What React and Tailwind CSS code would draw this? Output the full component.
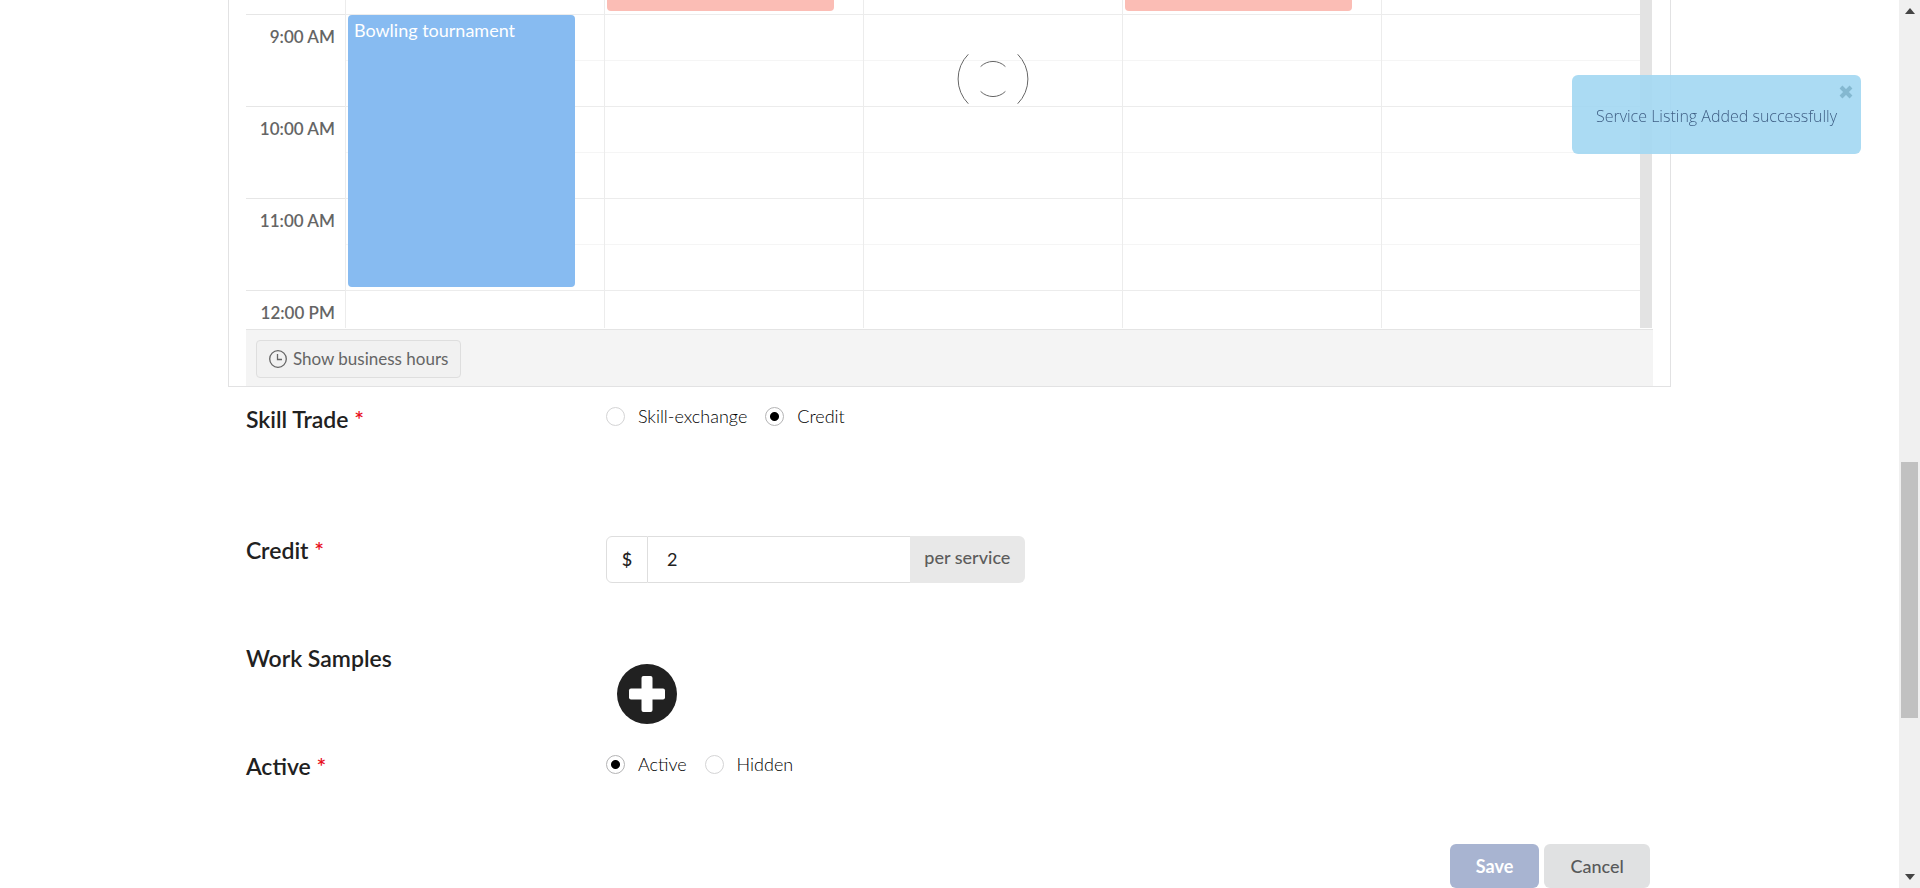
import React from "react";

const DAYS = ["mon", "tue", "wed", "thu", "fri"];

const HOURS = [
  { label: "9:00 AM", events: { mon: "Bowling tournament" } },
  { label: "10:00 AM", events: {} },
  { label: "11:00 AM", events: {} },
];

const ROW = "grid grid-cols-[99px_repeat(5,minmax(0,1fr))]";

function Scheduler() {
  return (
    <section
      aria-label="Schedule"
      className="border-x border-b border-[#e2e2e3] px-[17px]"
    >
      <div className="flex pr-px">
        <div className="flex-1 pb-px">
          <div className={ROW}>
            <div className="h-3.5" />
            {DAYS.map((day) => (
              <div key={day} className="relative h-3.5 border-l border-[#ececec]">
                {(day === "tue" || day === "thu") && (
                  <div className="absolute top-0 left-0.5 h-[11px] w-[88%] rounded-b-sm bg-[#fbbdb5]" />
                )}
              </div>
            ))}
          </div>
          {HOURS.map((hour) => (
            <div key={hour.label} className={ROW}>
              <div className="h-[92px] border-t border-[#e6e6e6] pt-2 pr-2.5 text-right text-[17px] leading-7 font-semibold text-[#656565]">
                {hour.label}
              </div>
              {DAYS.map((day) => (
                <div
                  key={day}
                  className="relative h-[92px] border-t border-l border-[#ececec]"
                >
                  <div className="h-[46px] border-b border-[#f5f5f5]" />
                  {hour.events[day] && (
                    <div className="absolute top-0 left-0.5 z-10 h-[272px] w-[88%] rounded-sm bg-[#87bbf1] px-1.5 py-px text-lg leading-7 text-white">
                      {hour.events[day]}
                    </div>
                  )}
                </div>
              ))}
            </div>
          ))}
          <div className={ROW}>
            <div className="h-[38px] border-t border-[#e6e6e6] pt-2 pr-2.5 text-right text-[17px] leading-7 font-semibold text-[#656565]">
              12:00 PM
            </div>
            {DAYS.map((day) => (
              <div key={day} className="h-[38px] border-t border-l border-[#ececec]" />
            ))}
          </div>
        </div>
        <div className="mb-px w-3 bg-[#e3e3e3]" />
      </div>
      <div className="flex h-[57px] items-start border-t border-[#e4e4e4] bg-[#f4f4f4] px-2.5 pt-2.5">
        <button
          type="button"
          className="flex h-[38px] items-center gap-1.5 rounded-sm border border-[#dedede] bg-[#f1f1f1] px-3 text-[17px] text-[#656565]"
        >
          <svg viewBox="0 0 18 18" className="size-[18px]" fill="none" stroke="currentColor" aria-hidden="true">
            <circle cx="9" cy="9" r="8.3" strokeWidth="1.3" />
            <path d="M8.500 4v5.500H13" strokeWidth="1.3" />
          </svg>
          Show business hours
        </button>
      </div>
    </section>
  );
}

function FieldRow({ label, required, className, children }) {
  return (
    <div className={`flex px-[18px] ${className}`}>
      <div className="w-[360px] shrink-0 text-[23px] leading-8 font-semibold text-[#212121]">
        {label}
        {required && <span className="text-[#e8101c]"> *</span>}
      </div>
      {children}
    </div>
  );
}

function Radio({ name, label, checked }) {
  return (
    <label className="flex items-center gap-[13px] text-lg leading-6 font-light text-black">
      <input
        type="radio"
        name={name}
        defaultChecked={checked}
        className="size-[19px] appearance-none rounded-full border border-[#d4d4d5] bg-white checked:border-[#b4b4b5] checked:bg-[radial-gradient(circle,#000_4px,transparent_5px)]"
      />
      {label}
    </label>
  );
}

function Spinner() {
  return (
    <svg viewBox="0 0 72 72" className="fixed top-[43px] left-[957px] z-20 size-[72px]" fill="none" stroke="#666" strokeWidth="1" role="img" aria-label="Loading">
      <path d="M11.3 11.3a35 35 0 0 0 0 49.4M60.7 11.3a35 35 0 0 1 0 49.4" />
      <path d="M23.6 23.6a17.5 17.5 0 0 1 24.8 0M23.6 48.4a17.5 17.5 0 0 0 24.8 0" />
    </svg>
  );
}

function Toast() {
  return (
    <div
      role="status"
      className="fixed top-[75px] right-[59px] z-20 flex h-[79px] w-[289px] items-center justify-center rounded-md bg-[#a2d7f2]/90 pt-0.5 font-['Open_Sans',sans-serif] text-base font-light text-[#3f5f85]"
    >
      Service Listing Added successfully
      <button type="button" aria-label="Close" className="absolute top-2.5 right-2 text-[#84b8d0]">
        <svg viewBox="0 0 14 14" className="size-3.5" stroke="currentColor" strokeWidth="4" aria-hidden="true">
          <path d="M2 2l10 10M12 2L2 12" />
        </svg>
      </button>
    </div>
  );
}

function PageScrollbar() {
  return (
    <div aria-hidden="true" className="flex w-[21px] flex-col items-center bg-[#f0f0f0] py-2">
      <svg viewBox="0 0 10 6" className="h-1.5 w-2.5" fill="#444">
        <path d="M0 6l5-6 5 6z" />
      </svg>
      <div className="flex w-[17px] flex-1 flex-col">
        <div className="flex-[448]" />
        <div className="flex-[256] bg-[#c1c1c1]" />
        <div className="flex-[156]" />
      </div>
      <svg viewBox="0 0 10 6" className="h-1.5 w-2.5" fill="#444">
        <path d="M0 0l5 6 5-6z" />
      </svg>
    </div>
  );
}

export default function App() {
  return (
    <div className="flex h-screen overflow-hidden bg-white font-[Lato,sans-serif]">
      <main className="flex-1 overflow-hidden">
        <form className="mx-auto w-[76%]" onSubmit={(e) => e.preventDefault()}>
          <Scheduler />
          <FieldRow label="Skill Trade" required className="h-[131px] pt-4">
            <div className="flex items-start gap-[18px] pt-px">
              <Radio name="trade" label="Skill-exchange" />
              <Radio name="trade" label="Credit" checked />
            </div>
          </FieldRow>
          <FieldRow label="Credit" required className="h-[108px] pt-4">
            <div className="flex items-start pt-0.5 text-lg">
              <label htmlFor="credit" className="flex h-[47px] w-[42px] items-center justify-center rounded-l-md border border-[#dedede] pb-0.5 font-medium text-[#222]">
                $
              </label>
              <input
                id="credit"
                defaultValue="2"
                className="h-[47px] w-[262px] border-y border-[#dedede] px-[19px] pb-0.5 text-[#222] outline-none"
              />
              <div className="flex h-[47px] w-[115px] items-center justify-center rounded-r-md bg-[#e8e8e8] pb-1.5 font-medium text-[#5c5c5c]">
                per service
              </div>
            </div>
          </FieldRow>
          <FieldRow label="Work Samples" className="h-[108px] pt-4">
            <button type="button" aria-label="Add work sample" className="mt-[22px] ml-[11px] size-[60px]">
              <svg viewBox="0 0 60 60" aria-hidden="true">
                <circle cx="30" cy="30" r="30" fill="#212121" />
                <rect x="24.500" y="12" width="11" height="36" rx="2" fill="#fff" />
                <rect x="12" y="24.500" width="36" height="11" rx="2" fill="#fff" />
              </svg>
            </button>
          </FieldRow>
          <FieldRow label="Active" required className="h-[110px] pt-4">
            <div className="flex items-start gap-[18px] pt-0.5">
              <Radio name="status" label="Active" checked />
              <Radio name="status" label="Hidden" />
            </div>
          </FieldRow>
          <div className="flex justify-end gap-[5px] pr-[21px] text-lg">
            <button type="submit" className="h-11 w-[89px] rounded-md bg-[#a8b4d1] font-bold text-white">
              Save
            </button>
            <button type="button" className="h-11 w-[106px] rounded-md bg-[#e0e1e2] font-medium text-[#58595a]">
              Cancel
            </button>
          </div>
        </form>
      </main>
      <PageScrollbar />
      <Spinner />
      <Toast />
    </div>
  );
}
